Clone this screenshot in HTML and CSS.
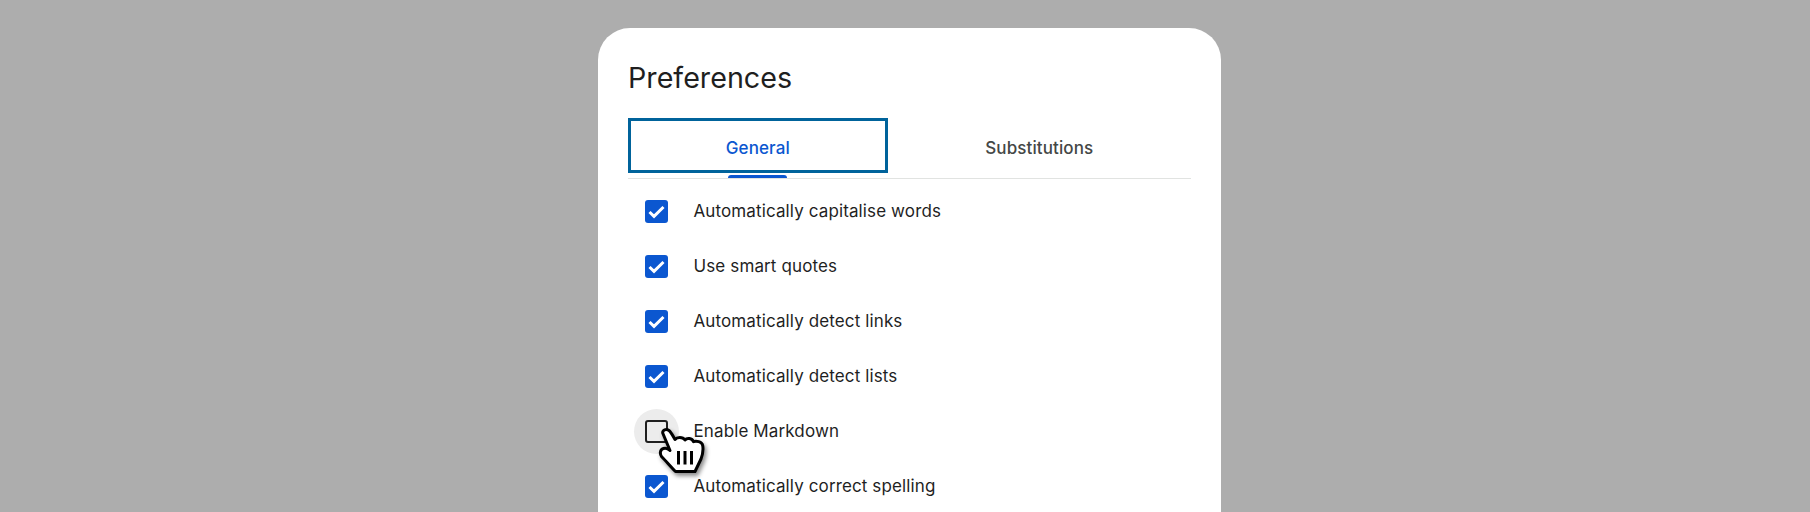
FILE: index.html
```html
<!DOCTYPE html>
<html>
<head>
  <title>Preferences</title>
  <link rel="stylesheet" href="styles.css">
</head>
<body>
  <div class="dialog">
    <h1>Preferences</h1>
    <div class="tabs">
      <div class="tab active"><span>General</span></div>
      <div class="tab"><span>Substitutions</span></div>
    </div>
    <ul class="options">
      <li class="option">
        <span class="box checked"><svg viewBox="0 0 23 23"><path d="M4.5 12l4.5 4.3L18.5 7"/></svg></span>
        <span class="label">Automatically capitalise words</span>
      </li>
      <li class="option">
        <span class="box checked"><svg viewBox="0 0 23 23"><path d="M4.5 12l4.5 4.3L18.5 7"/></svg></span>
        <span class="label">Use smart quotes</span>
      </li>
      <li class="option">
        <span class="box checked"><svg viewBox="0 0 23 23"><path d="M4.5 12l4.5 4.3L18.5 7"/></svg></span>
        <span class="label">Automatically detect links</span>
      </li>
      <li class="option">
        <span class="box checked"><svg viewBox="0 0 23 23"><path d="M4.5 12l4.5 4.3L18.5 7"/></svg></span>
        <span class="label">Automatically detect lists</span>
      </li>
      <li class="option hover">
        <span class="box"></span>
        <span class="label">Enable Markdown</span>
        <svg class="cursor" viewBox="0 0 49 51">
          <path class="hand" d="M5.7 7C5.5 4 9 2.5 12 4.5C14 6 16 10 18 13.5C20 11 25.5 10.5 28 14C30 11.5 35 12 36.5 15.7C39 14.5 45 15.5 45.7 19.5C46.5 24 45.5 29 44 33L38 45.5L18.5 45.5C14 41 9 35 4.7 30.7C2.5 28 3 23.5 6.3 22.5C9 21.5 11.5 23 13 24.5Z"/>
          <path class="grip" d="M21.5 25V38.5M28 25V38.5M34.5 25V38.5"/>
        </svg>
      </li>
      <li class="option">
        <span class="box checked"><svg viewBox="0 0 23 23"><path d="M4.5 12l4.5 4.3L18.5 7"/></svg></span>
        <span class="label">Automatically correct spelling</span>
      </li>
    </ul>
  </div>
</body>
</html>
```

FILE: styles.css
```css
html, body {
  height: 100%;
}

body {
  margin: 0;
  background-color: #adadad;
  color: #1f1f1f;
  font-family: Inter, Roboto, "Liberation Sans", sans-serif;
  overflow: hidden;
}

.dialog {
  box-sizing: border-box;
  width: 623px;
  height: 700px;
  margin: 28px 0 0 598px;
  padding: 32px 30px 0;
  background-color: #fff;
  border-radius: 32px;
}

h1 {
  margin: 0 0 22px;
  font-size: 28.7px;
  font-weight: 400;
  line-height: 36px;
}

.tabs {
  display: flex;
  height: 60px;
  border-bottom: 1px solid #e1e3e1;
}

.tab {
  position: relative;
  flex: 1 1 auto;
  display: flex;
  align-items: center;
  justify-content: center;
  box-sizing: border-box;
  height: 55px;
  padding: 4px 16px 0;
  color: #444746;
  font-size: 17px;
  font-weight: 500;
  letter-spacing: 0.1px;
}

.tab.active {
  color: #0b57d0;
  outline: 3px solid #00639b;
  outline-offset: -3px;
}

.tab.active::after {
  content: "";
  position: absolute;
  left: 100px;
  width: 59px;
  bottom: -5px;
  height: 3px;
  background-color: #0b57d0;
  border-radius: 3px 3px 0 0;
}

.options {
  margin: 5px 0 0;
  padding: 0;
  list-style: none;
}

.option {
  position: relative;
  display: flex;
  align-items: center;
  height: 55px;
  padding-left: 17px;
}

.box {
  box-sizing: border-box;
  flex: none;
  width: 23px;
  height: 23px;
  margin-right: 25.5px;
  border: 2px solid #1f1f1f;
  border-radius: 3px;
}

.box.checked {
  background-color: #0b57d0;
  border: none;
}

.box svg {
  display: block;
  width: 23px;
  height: 23px;
}

.box path {
  fill: none;
  stroke: #fff;
  stroke-width: 3;
}

.label {
  margin-top: -2px;
  font-size: 17px;
  letter-spacing: 0.12px;
}

.option.hover::before {
  content: "";
  position: absolute;
  left: 6px;
  top: 5px;
  width: 45px;
  height: 45px;
  background-color: #ececec;
  border-radius: 50%;
}

.option.hover .box,
.option.hover .label {
  position: relative;
}

.cursor {
  position: absolute;
  left: 29px;
  top: 22px;
  width: 49px;
  height: 51px;
  filter: drop-shadow(2px 3px 2px rgba(0, 0, 0, 0.45));
}

.hand {
  fill: #fff;
  stroke: #000;
  stroke-width: 3;
  stroke-linejoin: round;
}

.grip {
  fill: none;
  stroke: #000;
  stroke-width: 3;
}
```
